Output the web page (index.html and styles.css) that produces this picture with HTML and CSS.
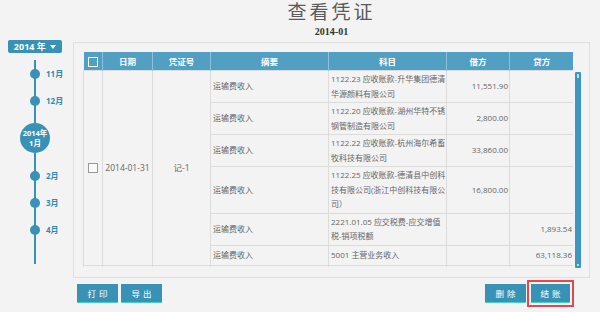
FILE: index.html
```html
<!DOCTYPE html>
<html lang="zh-CN">
<head>
    <meta charset="UTF-8">
    <meta name="viewport" content="width=device-width, initial-scale=1.0">
    <title>查看凭证</title>
    <link rel="stylesheet" href="styles.css">
</head>
<body>

<div class="page">
    <aside class="side">
        <div class="year">2014 年 <span class="caret"></span></div>
        <div class="timeline">
            <div class="node"><span class="dot"></span><span class="mon">11月</span></div>
            <div class="node"><span class="dot"></span><span class="mon">12月</span></div>
            <div class="node node-cur"><span class="cur">2014年<br>1月</span></div>
            <div class="node"><span class="dot"></span><span class="mon">2月</span></div>
            <div class="node"><span class="dot"></span><span class="mon">3月</span></div>
            <div class="node"><span class="dot"></span><span class="mon">4月</span></div>
        </div>
    </aside>

    <main class="main">
        <div class="head">
            <h1>查看凭证</h1>
            <div class="period">2014-01</div>
        </div>

        <div class="panel">
            <div class="grid-wrap">
                <table class="grid">
                    <colgroup>
                        <col style="width:19px">
                        <col style="width:50px">
                        <col style="width:58px">
                        <col style="width:118px">
                        <col style="width:118px">
                        <col style="width:63px">
                        <col style="width:64px">
                    </colgroup>
                    <thead>
                        <tr>
                            <th><span class="check check-head"></span></th>
                            <th>日期</th>
                            <th>凭证号</th>
                            <th>摘要</th>
                            <th>科目</th>
                            <th>借方</th>
                            <th>贷方</th>
                        </tr>
                    </thead>
                    <tbody>
                        <tr>
                            <td rowspan="6" class="c"><span class="check"></span></td>
                            <td rowspan="6" class="c">2014-01-31</td>
                            <td rowspan="6" class="c">记-1</td>
                            <td>运输费收入</td>
                            <td>1122.23 应收账款-升华集团德清<br>华源颜料有限公司</td>
                            <td class="num">11,551.90</td>
                            <td class="num"></td>
                        </tr>
                        <tr>
                            <td>运输费收入</td>
                            <td>1122.20 应收账款-湖州华特不锈<br>钢管制造有限公司</td>
                            <td class="num">2,800.00</td>
                            <td class="num"></td>
                        </tr>
                        <tr>
                            <td>运输费收入</td>
                            <td>1122.22 应收账款-杭州海尔希畜<br>牧科技有限公司</td>
                            <td class="num">33,860.00</td>
                            <td class="num"></td>
                        </tr>
                        <tr>
                            <td>运输费收入</td>
                            <td>1122.25 应收账款-德清县中创科<br>技有限公司(浙江中创科技有限公<br>司）</td>
                            <td class="num">16,800.00</td>
                            <td class="num"></td>
                        </tr>
                        <tr>
                            <td>运输费收入</td>
                            <td>2221.01.05 应交税费-应交增值<br>税-销项税额</td>
                            <td class="num"></td>
                            <td class="num">1,893.54</td>
                        </tr>
                        <tr class="short">
                            <td>运输费收入</td>
                            <td>5001 主营业务收入</td>
                            <td class="num"></td>
                            <td class="num">63,118.36</td>
                        </tr>
                        <tr class="short">
                            <td></td><td></td><td></td><td></td><td></td><td></td><td></td>
                        </tr>
                    </tbody>
                </table>
            </div>
            <div class="scrollbar"></div>
        </div>

        <div class="actions">
            <div class="group">
                <button class="btn">打印</button>
                <button class="btn">导出</button>
            </div>
            <div class="group group-right">
                <button class="btn">删除</button>
                <button class="btn btn-mark">结账</button>
            </div>
        </div>
    </main>
</div>

</body>
</html>
```

FILE: styles.css
```css
body {
    margin: 0;
    background: #f3f3f3;
    font-family: "Open Sans", "Noto Sans CJK SC", sans-serif;
    color: #666;
}
.page {
    display: flex;
    width: 600px;
    height: 312px;
}

/* left: year + month timeline */
.side {
    width: 73px;
    flex: none;
}
.year {
    margin: 40px 0 0 8px;
    width: 54px;
    height: 13px;
    background: #3892b6;
    border-radius: 2px;
    color: #fff;
    font-size: 9px;
    font-weight: bold;
    line-height: 13px;
    text-align: center;
}
.caret {
    display: inline-block;
    width: 0;
    height: 0;
    margin-left: 2px;
    border-left: 3.5px solid transparent;
    border-right: 3.5px solid transparent;
    border-top: 4px solid #fff;
    vertical-align: 1px;
}
.timeline {
    position: relative;
    margin-top: 7px;
    height: 204px;
}
.timeline::before {
    content: "";
    position: absolute;
    left: 34px;
    top: 0;
    bottom: 0;
    width: 2px;
    background: #3892b6;
}
.node {
    position: relative;
    display: flex;
    align-items: center;
    height: 27px;
    padding-left: 30px;
    gap: 6px;
}
.dot {
    width: 10px;
    height: 10px;
    border-radius: 50%;
    background: #3892b6;
}
.mon {
    color: #2f8ab3;
    font-size: 8px;
    font-weight: bold;
}
.node-cur {
    height: 48px;
    padding-left: 20px;
}
.cur {
    width: 30px;
    height: 30px;
    border-radius: 50%;
    background: #3892b6;
    color: #fff;
    font-size: 7.5px;
    font-weight: bold;
    line-height: 10px;
    text-align: center;
    display: flex;
    align-items: center;
    justify-content: center;
}

/* main column */
.main {
    width: 517px;
    flex: none;
}
.head {
    height: 42px;
    text-align: center;
}
h1 {
    margin: 0;
    padding-top: 1px;
    font-size: 19px;
    font-weight: normal;
    line-height: 22px;
    letter-spacing: 3px;
    color: #5a5a5a;
}
.period {
    margin-top: 3px;
    font-family: "Liberation Serif", serif;
    font-size: 10px;
    font-weight: bold;
    color: #333;
}
.panel {
    display: flex;
    align-items: flex-start;
    gap: 2px;
    border: 1px solid #e0e0e0;
    padding: 9px 8px 9px 9px;
}
.grid-wrap {
    width: 490px;
    height: 215px;
    overflow: hidden;
}
.grid {
    width: 490px;
    table-layout: fixed;
    border-collapse: collapse;
    font-size: 8px;
}
.grid th {
    height: 18px;
    padding: 0;
    background: #529fc4;
    color: #fff;
    font-weight: bold;
    font-size: 8.5px;
    border-right: 1px solid #8cc2dc;
}
.grid th:last-child {
    border-right: 0;
}
.grid td {
    padding: 1px 2px;
    line-height: 14.5px;
    border: 1px solid #dcdcdc;
    white-space: nowrap;
    vertical-align: middle;
}
.grid tr.short td {
    height: 17px;
}
.grid td.c {
    text-align: center;
    font-size: 8.5px;
}
.grid td.num {
    text-align: right;
    padding-right: 1px;
}
.check {
    display: inline-block;
    width: 8px;
    height: 8px;
    border: 1px solid #999;
    background: #fafafa;
    vertical-align: middle;
}
.check-head {
    border-color: #fff;
    background: transparent;
}
.scrollbar {
    position: relative;
    margin-top: 20px;
    width: 6px;
    height: 196px;
    background: #3c96bd;
    border-radius: 1px;
}
.scrollbar::before,
.scrollbar::after {
    content: "";
    position: absolute;
    left: 2px;
    width: 2px;
    background: #bfe0ee;
}
.scrollbar::before {
    top: 2px;
    height: 4px;
}
.scrollbar::after {
    bottom: 2px;
    height: 2px;
}

/* buttons */
.actions {
    display: flex;
    justify-content: space-between;
    padding: 6px 20px 0 4px;
}
.group {
    display: flex;
    gap: 3px;
}
.group-right {
    gap: 5px;
}
.btn {
    width: 41px;
    height: 19px;
    padding: 0;
    border: 0;
    border-bottom: 1px solid #48d0c0;
    background: #3892b6;
    color: #fff;
    font-family: "Open Sans", "Noto Sans CJK SC", sans-serif;
    font-size: 8.5px;
    letter-spacing: 3px;
    text-indent: 3px;
    cursor: pointer;
}
.btn-mark {
    width: 39px;
    outline: 2px solid #e5474b;
    outline-offset: 2px;
}
```
